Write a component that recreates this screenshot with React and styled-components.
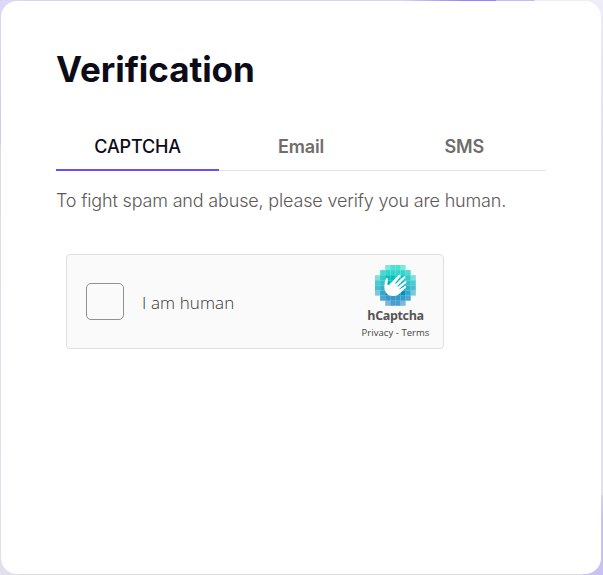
import React, { useState } from "react";
import styled, { createGlobalStyle } from "styled-components";

const TABS = ["CAPTCHA", "Email", "SMS"];

// opacity of every tile of the logo, in tenths (0 = no tile)
const TILES = ["00577500", "07888870", "58aaaa85", "78aaaa87", "78aaaa87", "58aaaa85", "07888870", "00577500"];
const ROW_COLORS = ["#00d4bf", "#00ccbf", "#00c1bf", "#00b5bf", "#00a4bf", "#0092bf", "#0083bf", "#0074bf"];

const HCaptchaLogo = () => (
    <svg width="41" height="41" viewBox="0 0 123 123">
        {TILES.map((row, y) =>
            row.split("").map((v, x) =>
                v === "0" ? null : (
                    <rect
                        key={`${x}-${y}`}
                        x={x * 15.3}
                        y={y * 15.3}
                        width="15.3"
                        height="15.3"
                        fill={ROW_COLORS[y]}
                        opacity={v === "a" ? 1 : Number(v) / 10}
                    />
                )
            )
        )}
        <path
            d="M37 58 L39 46 C40 39 36 37 33 41 C29 46 29 56 28 66 C28 83 39 93 54 93 C66 93 72 89 78 82 L92 69 C95 65 92 62 88 64 L75 73 L73 71 L93 54 C97 49 93 46 89 49 L69 65 L67 63 L90 40 C93 35 89 31 85 35 L62 57 L60 55 L76 35 C79 30 74 27 70 31 L48 54 C43 60 39 62 37 58 Z"
            fill="#fff"
        />
    </svg>
);

const App = () => {
    const [active, setActive] = useState("CAPTCHA");
    const [checked, setChecked] = useState(false);
    return (
        <>
            <GlobalStyle />
            <Page>
                <Card>
                    <Title>Verification</Title>
                    <TabList>
                        {TABS.map((tab) => (
                            <Tab key={tab} $active={tab === active} onClick={() => setActive(tab)}>
                                {tab}
                            </Tab>
                        ))}
                    </TabList>
                    <Description>To fight spam and abuse, please verify you are human.</Description>
                    <Captcha>
                        <CheckBox aria-pressed={checked} onClick={() => setChecked((prev) => !prev)} />
                        <CaptchaLabel>I am human</CaptchaLabel>
                        <Brand>
                            <HCaptchaLogo />
                            <BrandName>hCaptcha</BrandName>
                            <BrandLinks>Privacy - Terms</BrandLinks>
                        </Brand>
                    </Captcha>
                </Card>
            </Page>
        </>
    );
};

const GlobalStyle = createGlobalStyle`
    * {
        box-sizing: border-box;
    }

    body {
        margin: 0;
        font-family: Inter, "Liberation Sans", sans-serif;
    }
`;

const Page = styled.div`
    height: 575px;
    padding: 1px 2px 1px 1px;
    background:
        linear-gradient(90deg, #dcd6f5 0, #dcd6f5 400px, #b9adfb 430px, #9480fa 465px, #9480fa 496px, #c4b9fb 496px, #c4b9fb 534px, #efecfc 535px) 0 0 / 100% 1px no-repeat,
        linear-gradient(#efecfb 0, #e2e0ec 140px, #e2e0ec 494px, #d6d0ef 496px, #c9c2ef 520px) 100% 0 / 20px 100% no-repeat,
        linear-gradient(#ded8f7 0, #cfc8ee 140px, #dedaec 150px, #e2e0ec 100%) 0 0 / 20px 100% no-repeat,
        #dcdae2;
`;

const Card = styled.main`
    height: 573px;
    padding: 46px 55px 0;
    border-radius: 16px;
    background: #fff;
`;

const Title = styled.h1`
    margin: 0;
    font-size: 35px;
    line-height: 44px;
    font-weight: 650;
    font-optical-sizing: none;
    letter-spacing: -0.05px;
    color: #0b0c18;
`;

const TabList = styled.div`
    display: flex;
    width: 490px;
    height: 40px;
    margin-top: 40px;
    box-shadow: inset 0 -1px #e5e5e8;
`;

const Tab = styled.button`
    flex: 1;
    padding: 0 0 7px;
    border: 0;
    border-bottom: 2px solid ${({ $active }) => ($active ? "#6d4aff" : "transparent")};
    background: none;
    font-family: inherit;
    font-size: 18px;
    font-weight: ${({ $active }) => ($active ? 500 : 600)};
    letter-spacing: -0.15px;
    color: ${({ $active }) => ($active ? "#0b0c18" : "#706d6b")};
    cursor: pointer;
`;

const Description = styled.p`
    margin: 18px 0 0;
    font-size: 18px;
    line-height: 24px;
    font-weight: 300;
    letter-spacing: -0.17px;
    color: #5c5958;
    white-space: nowrap;
`;

const Captcha = styled.div`
    display: flex;
    align-items: center;
    width: 378px;
    height: 95px;
    margin: 41px 0 0 10px;
    padding: 0 12px 0 19px;
    border: 1px solid #e0e0e0;
    border-radius: 4px;
    background: #fafafa;
`;

const CheckBox = styled.button`
    width: 38px;
    height: 37px;
    padding: 0;
    border: 1px solid #919191;
    border-radius: 5px;
    background: #fafafa;
    cursor: pointer;
`;

const CaptchaLabel = styled.span`
    flex: 1;
    margin: 2px 0 0 18px;
    font-family: "Open Sans", "Noto Sans", sans-serif;
    font-size: 17px;
    font-weight: 300;
    line-height: 24px;
    letter-spacing: 0.1px;
    color: #333;
`;

const Brand = styled.div`
    display: flex;
    flex-direction: column;
    align-items: center;
    width: 71px;
    height: 73px;
    font-family: "Open Sans", "Noto Sans", sans-serif;
    white-space: nowrap;

    svg {
        flex: none;
    }
`;

const BrandName = styled.span`
    margin-top: 1px;
    font-size: 12.5px;
    line-height: 17px;
    font-weight: 700;
    letter-spacing: -0.35px;
    color: #555;
`;

const BrandLinks = styled.span`
    margin-top: 2px;
    font-size: 9.5px;
    line-height: 13px;
    letter-spacing: 0.05px;
    color: #444;
`;

export default App;
